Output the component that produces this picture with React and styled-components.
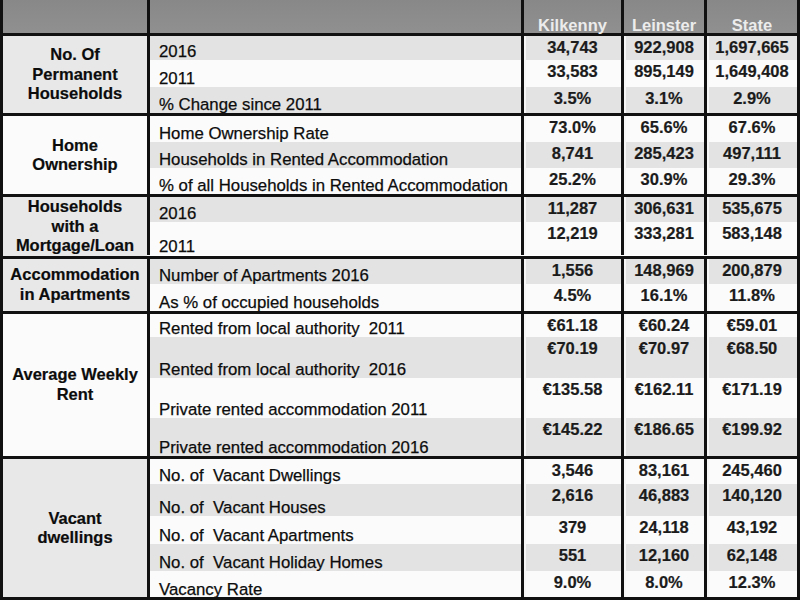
import styled, { createGlobalStyle } from "styled-components";

const GlobalStyle = createGlobalStyle`
  html, body { margin: 0; padding: 0; background: #fff; }
  body { font-family: "Liberation Sans", Arial, sans-serif; }
`;

const COLS = "144px 374px 100px 83px 93px";
const LINE = "#111";
const SHADE = "#e3e3e3";
const LIGHT = "#fbfbfb";

let Sheet = styled.div`
  width: 800px;
  height: 600px;
  box-sizing: border-box;
  border-left: 3px solid ${LINE};
  border-right: 3px solid ${LINE};
  border-bottom: 3px solid ${LINE};
  font-size: 16.5px;
  line-height: 19px;
  color: #0c0c0c;
  overflow: hidden;
`;

let HeaderRow = styled.div`
  display: grid;
  grid-template-columns: ${COLS};
  height: 33px;
  background: linear-gradient(#888, #909090);
`;

let HeadCell = styled.div`
  box-sizing: border-box;
  border-left: ${(p) => (p.$first ? "none" : `3px solid ${LINE}`)};
  display: flex;
  align-items: flex-end;
  justify-content: center;
  line-height: 14px;
  padding-bottom: 1px;
  color: #ececec;
  font-weight: bold;
`;

let Group = styled.div`
  display: grid;
  grid-template-columns: ${COLS};
  border-top: 3px solid ${LINE};
`;

let GroupTitle = styled.div`
  grid-row: span ${(p) => p.$span};
  display: flex;
  align-items: center;
  justify-content: center;
  text-align: center;
  font-weight: bold;
  line-height: 19.5px;
  -webkit-text-stroke: 0.2px #111;
  background: ${(p) => (p.$shade ? "#e8e8e8" : LIGHT)};
`;

let Label = styled.div`
  box-sizing: border-box;
  height: ${(p) => p.$h}px;
  border-left: 3px solid ${LINE};
  padding: 0 0 0 9px;
  display: flex;
  align-items: flex-end;
  font-size: 16.8px;
  line-height: 16px;
  white-space: pre;
  -webkit-text-stroke: 0.25px #111;
  background: ${(p) => (p.$shade ? SHADE : LIGHT)};
`;

let Value = styled.div`
  box-sizing: border-box;
  height: ${(p) => p.$h}px;
  border-left: 3px solid ${LINE};
  padding-top: 2px;
  display: flex;
  justify-content: center;
  align-items: flex-start;
  font-weight: bold;
  color: #1b1b1b;
  -webkit-text-stroke: 0.2px #1b1b1b;
  background: ${(p) => (p.$shade ? SHADE : LIGHT)};
  box-shadow: inset 2px 0 0 #f7f7f7;
`;

const groups = [
  {
    title: ["No. Of", "Permanent", "Households"],
    shade: true,
    rows: [
      ["2016", ["34,743", "922,908", "1,697,665"], 24, true],
      ["2011", ["33,583", "895,149", "1,649,408"], 27, false],
      ["% Change since 2011", ["3.5%", "3.1%", "2.9%"], 26, true],
    ],
  },
  {
    title: ["Home", "Ownership"],
    shade: false,
    rows: [
      ["Home Ownership Rate", ["73.0%", "65.6%", "67.6%"], 26, false],
      ["Households in Rented Accommodation", ["8,741", "285,423", "497,111"], 26, true],
      ["% of all Households in Rented Accommodation", ["25.2%", "30.9%", "29.3%"], 26, false],
    ],
  },
  {
    title: ["Households", "with a", "Mortgage/Loan"],
    shade: true,
    rows: [
      ["2016", ["11,287", "306,631", "535,675"], 25, true],
      ["2011", ["12,219", "333,281", "583,148"], 33, false],
    ],
  },
  {
    title: ["Accommodation", "in Apartments"],
    shade: true,
    rows: [
      ["Number of Apartments 2016", ["1,556", "148,969", "200,879"], 25, true],
      ["As % of occupied households", ["4.5%", "16.1%", "11.8%"], 27, false],
    ],
  },
  {
    title: ["Average Weekly", "Rent"],
    shade: false,
    rows: [
      ["Rented from local authority  2011", ["€61.18", "€60.24", "€59.01"], 23, false],
      ["Rented from local authority  2016", ["€70.19", "€70.97", "€68.50"], 41, true],
      ["Private rented accommodation 2011", ["€135.58", "€162.11", "€171.19"], 40, false],
      ["Private rented accommodation 2016", ["€145.22", "€186.65", "€199.92"], 38, true],
    ],
  },
  {
    title: ["Vacant", "dwellings"],
    shade: true,
    rows: [
      ["No. of  Vacant Dwellings", ["3,546", "83,161", "245,460"], 25, false],
      ["No. of  Vacant Houses", ["2,616", "46,883", "140,120"], 32, true],
      ["No. of  Vacant Apartments", ["379", "24,118", "43,192"], 28, false],
      ["No. of  Vacant Holiday Homes", ["551", "12,160", "62,148"], 27, true],
      ["Vacancy Rate", ["9.0%", "8.0%", "12.3%"], 27, false],
    ],
  },
];

export default function App() {
  return (
    <>
      <GlobalStyle />
      <Sheet>
        <HeaderRow>
          <HeadCell $first />
          <HeadCell />
          <HeadCell>Kilkenny</HeadCell>
          <HeadCell>Leinster</HeadCell>
          <HeadCell>State</HeadCell>
        </HeaderRow>
        {groups.map((g, gi) => (
          <Group key={gi}>
            <GroupTitle $span={g.rows.length} $shade={g.shade}>
              <div>
                {g.title.map((t, i) => (
                  <div key={i}>{t}</div>
                ))}
              </div>
            </GroupTitle>
            {g.rows.map(([label, vals, h, shade], ri) => [
              <Label key={`l${ri}`} $h={h} $shade={shade}>
                {label}
              </Label>,
              ...vals.map((v, vi) => (
                <Value key={`v${ri}-${vi}`} $h={h} $shade={shade}>
                  {v}
                </Value>
              )),
            ])}
          </Group>
        ))}
      </Sheet>
    </>
  );
}
